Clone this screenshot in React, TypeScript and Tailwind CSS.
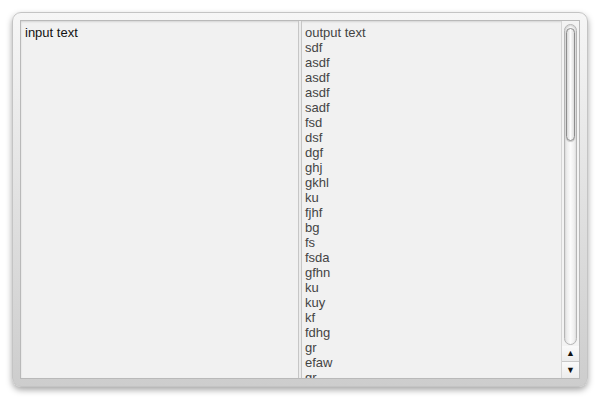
import React from 'react';

const lines = [
  'output text', 'sdf', 'asdf', 'asdf', 'asdf', 'sadf', 'fsd', 'dsf', 'dgf', 'ghj', 'gkhl', 'ku',
  'fjhf', 'bg', 'fs', 'fsda', 'gfhn', 'ku', 'kuy', 'kf', 'fdhg', 'gr', 'efaw', 'gr',
];

const ScrollBar: React.FC = () => (
  <div className="w-[18px] h-full flex flex-col bg-[#f3f3f3] border-l border-[#d6d6d6]">
    <div className="flex-1 px-[2px] pt-[3px] pb-[1px]">
      <div className="relative h-full rounded-full border border-[#b5b5b5] bg-gradient-to-r from-[#e6e6e6] via-[#fbfbfb] to-[#e9e9e9] shadow-[inset_0_1px_2px_rgba(0,0,0,0.15)]">
        <div className="absolute left-[1px] right-[1px] top-[3px] h-[113px] rounded-full border border-[#8d8d8d] bg-gradient-to-r from-[#d8d8d8] via-[#fdfdfd] to-[#dcdcdc] shadow-[0_1px_1px_rgba(0,0,0,0.2)]" />
      </div>
    </div>
    <div className="h-[16px] flex items-center justify-center border-b border-[#c9c9c9] bg-gradient-to-b from-[#fafafa] to-[#ececec]">
      <span className="text-[9px] leading-none text-[#111]">▲</span>
    </div>
    <div className="h-[16px] flex items-center justify-center bg-gradient-to-b from-[#fafafa] to-[#ececec]">
      <span className="text-[9px] leading-none text-[#111]">▼</span>
    </div>
  </div>
);

export default function App() {
  return (
    <div className="w-[600px] h-[400px] bg-white pt-[12px] px-[12px]" style={{ fontFamily: '"Liberation Sans", Arial, sans-serif' }}>
      <div className="h-[375px] rounded-[9px] border border-[#c4c4c4] bg-gradient-to-b from-[#f6f6f6] to-[#cdcdcd] p-[7px] shadow-[0_3px_6px_rgba(0,0,0,0.35)]">
        <div className="h-full flex border border-[#b9b9b9] bg-[#f1f1f1] shadow-[inset_0_1px_2px_rgba(0,0,0,0.12)] overflow-hidden">
          <div className="w-[277px] pl-[4px] pt-[4px] text-[13px] leading-[15px] text-[#111]">input text</div>
          <div className="w-[4px] border-x border-[#c6c6c6] bg-[#ececec]" />
          <div className="flex-1 overflow-hidden pl-[3px] pt-[4px] text-[13px] leading-[15px] text-[#444]">
            {lines.map((l, i) => (
              <div key={i}>{l}</div>
            ))}
          </div>
          <ScrollBar />
        </div>
      </div>
    </div>
  );
}
